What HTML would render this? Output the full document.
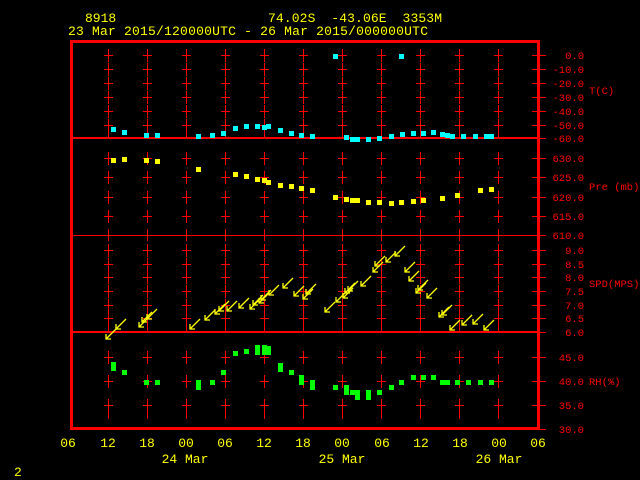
<!DOCTYPE html>
<html><head><meta charset="utf-8"><style>
html,body{margin:0;padding:0;background:#000;width:640px;height:480px;overflow:hidden}
svg{display:block}
text{font-family:"Liberation Mono","DejaVu Sans Mono",monospace;white-space:pre}
.y{fill:#ffff00;font-size:13px}
.r{fill:#ff0000;font-size:10.5px}
</style></head><body>
<svg id="s" width="640" height="480" viewBox="0 0 640 480" xmlns="http://www.w3.org/2000/svg" xml:space="preserve">
<g stroke="#ff0000" fill="none">
<rect x="71.5" y="41.5" width="467" height="387" stroke-width="3"/>
<line x1="72" y1="138" x2="538" y2="138" stroke-width="2"/>
<line x1="72" y1="332" x2="538" y2="332" stroke-width="2"/>
<line x1="72" y1="235.5" x2="545" y2="235.5" stroke-width="1"/>
</g>
<g id="grid" stroke="#ff0000" stroke-width="1"></g>
<g id="pts"></g>
<g id="wind" stroke="#ffff00" stroke-width="1.3" fill="none"></g>
<text class="y" x="85" y="22">8918</text>
<text class="y" x="268" y="22" textLength="174" lengthAdjust="spacing">74.02S  -43.06E  3353M</text>
<text class="y" x="68" y="35" textLength="360" lengthAdjust="spacing">23 Mar 2015/120000UTC - 26 Mar 2015/000000UTC</text>
<g class="r" text-anchor="end">
<text x="584" y="59">0.0</text><text x="584" y="73">-10.0</text><text x="584" y="87">-20.0</text>
<text x="584" y="101">-30.0</text><text x="584" y="115">-40.0</text><text x="584" y="129">-50.0</text>
<text x="584" y="142">-60.0</text>
<text x="584" y="162">630.0</text><text x="584" y="181">625.0</text><text x="584" y="201">620.0</text>
<text x="584" y="220">615.0</text><text x="584" y="239">610.0</text>
<text x="584" y="254">9.0</text><text x="584" y="268">8.5</text><text x="584" y="281">8.0</text>
<text x="584" y="295">7.5</text><text x="584" y="309">7.0</text><text x="584" y="322">6.5</text>
<text x="584" y="336">6.0</text>
<text x="584" y="361">45.0</text><text x="584" y="385">40.0</text><text x="584" y="409">35.0</text>
<text x="584" y="433">30.0</text>
</g>
<g class="r">
<text x="589" y="94">T(C)</text><text x="589" y="190">Pre (mb)</text>
<text x="589" y="287">SPD(MPS)</text><text x="589" y="385">RH(%)</text>
</g>
<g class="y" text-anchor="middle">
<text x="68" y="447">06</text><text x="108" y="447">12</text><text x="147" y="447">18</text>
<text x="186" y="447">00</text><text x="225" y="447">06</text><text x="264" y="447">12</text>
<text x="303" y="447">18</text><text x="342" y="447">00</text><text x="382" y="447">06</text>
<text x="421" y="447">12</text><text x="460" y="447">18</text><text x="499" y="447">00</text>
<text x="538" y="447">06</text>
<text x="185" y="463">24 Mar</text><text x="342" y="463">25 Mar</text><text x="499" y="463">26 Mar</text>
</g>
<text class="y" x="14" y="476">2</text>
</svg>
<script>
var NS="http://www.w3.org/2000/svg";
function el(p,t,a){var e=document.createElementNS(NS,t);for(var k in a)e.setAttribute(k,a[k]);p.appendChild(e);return e;}
var g=document.getElementById('grid');
var xs=[108,147,186,225,264,303,342,381,420,459,498];
var ys=[55,69,83,97,111,125,158,177,197,216,250,264,277,291,305,318,357,381,405];
xs.forEach(function(x){ys.forEach(function(y){
 el(g,'line',{x1:x+.5,y1:y-6,x2:x+.5,y2:y+7});
 el(g,'line',{x1:x-4,y1:y+.5,x2:x+5,y2:y+.5});
});
[[138],[332]].forEach(function(a){el(g,'line',{x1:x+.5,y1:a[0]-8,x2:x+.5,y2:a[0]});});
el(g,'line',{x1:x+.5,y1:229,x2:x+.5,y2:241});
el(g,'line',{x1:x+.5,y1:410,x2:x+.5,y2:419});
});
[55,69,83,97,111,125,138,158,177,197,216,235,250,264,277,291,305,318,332,357,381,405,429].forEach(function(y){
 el(g,'line',{x1:532,y1:y+.5,x2:546,y2:y+.5});});
var p=document.getElementById('pts');
function sq(list,c){list.forEach(function(q){el(p,'rect',{x:q[0]-2,y:q[1]-2,width:5,height:5,fill:c});});}
sq([[113,129],[124,132],[146,135],[157,135],[198,136],[212,135],[223,133],[235,128],[246,126],[257,126],[264,127],[268,126],[280,130],[291,133],[301,135],[312,136],[335,56],[346,137],[352,139],[357,139],[368,139],[379,138],[391,136],[401,56],[402,134],[413,133],[423,133],[433,132],[442,134],[447,135],[452,136],[463,136],[475,136],[486,136],[491,136]],'#00ffff');
sq([[113,160],[124,159],[146,160],[157,161],[198,169],[235,174],[246,176],[257,179],[264,180],[268,182],[280,185],[291,186],[301,188],[312,190],[335,197],[346,199],[352,200],[357,200],[368,202],[379,202],[391,203],[401,202],[413,201],[423,200],[442,198],[457,195],[480,190],[491,189]],'#ffff00');
sq([[113,364],[113,368],[124,372],[146,382],[157,382],[198,382],[198,387],[212,382],[223,372],[235,353],[246,351],[257,347],[264,347],[268,348],[257,352],[264,352],[268,352],[280,365],[280,369],[291,372],[301,377],[301,382],[312,382],[312,387],[335,387],[346,387],[346,392],[352,392],[357,392],[357,397],[368,392],[368,397],[379,392],[391,387],[401,382],[413,377],[423,377],[433,377],[442,382],[447,382],[457,382],[468,382],[480,382],[491,382]],'#00ff00');
var w=document.getElementById('wind');
[[106,339],[116,329],[139,327],[142,322],[147,319],[190,329],[205,320],[215,314],[219,311],[227,311],[239,308],[250,309],[253,305],[259,303],[261,300],[269,295],[283,288],[294,296],[303,299],[306,294],[325,312],[336,302],[343,298],[345,293],[348,291],[361,286],[373,272],[375,266],[386,262],[395,256],[405,272],[409,281],[416,293],[418,290],[427,298],[439,317],[442,315],[450,330],[462,325],[473,324],[484,330]].forEach(function(a){
 var x=a[0],y=a[1];
 el(w,'path',{d:'M'+(x+10)+' '+(y-10)+'L'+x+' '+y+'M'+x+' '+(y-5)+'L'+x+' '+y+'L'+(x+5)+' '+y});
});
</script>
</body></html>
